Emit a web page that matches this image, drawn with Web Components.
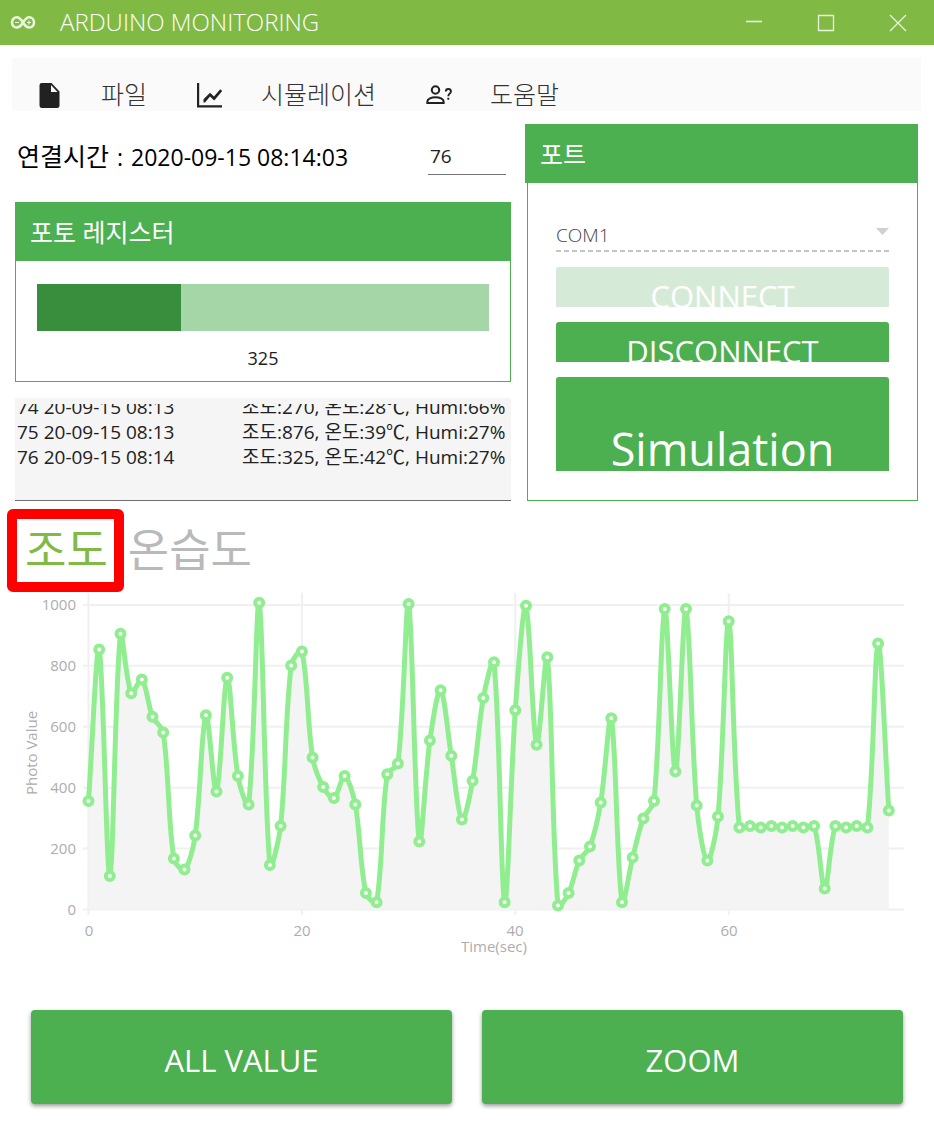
<!DOCTYPE html>
<html lang="ko">
<head>
<meta charset="utf-8">
<meta name="viewport" content="width=device-width, initial-scale=1">
<title>ARDUINO MONITORING</title>
<style>
  body { margin: 0; background: #fff; color: #000; font-family: "Open Sans", "Noto Sans CJK KR", sans-serif; }
</style>
</head>
<body>
<arduino-app></arduino-app>
<script>
function define(name, html, setup) {
  const template = document.createElement('template');
  template.innerHTML = html;
  customElements.define(name, class extends HTMLElement {
    connectedCallback() {
      if (this.shadowRoot) return;
      const root = this.attachShadow({ mode: 'open' });
      root.append(template.content.cloneNode(true));
      if (setup) setup(root, this);
    }
  });
}

define('title-bar', `
<style>
  :host { display: flex; align-items: center; height: 45px; background: #80ba45; color: #fff; }
  .logo { width: 26px; height: 15px; margin: 0 24px 0 10px; }
  h1 { flex: 1; margin: 0; padding-bottom: 2px; font-size: 24px; line-height: 30px; font-weight: 300; white-space: nowrap; }
  button { width: 72px; height: 45px; padding: 0; border: 0; background: none; color: inherit; display: grid; place-items: center; }
  button svg { width: 18px; height: 18px; fill: none; stroke: #e9f3dc; stroke-width: 1.3; }
</style>
<svg class="logo" viewBox="0 0 26 15" fill="none" stroke="#eaf5de" aria-hidden="true">
  <path stroke-width="2.6" d="M13 7.500C10.800 4 9.200 2.300 6.800 2.300C4 2.300 2 4.600 2 7.500C2 10.400 4 12.500 6.800 12.500C9.200 12.500 10.800 11 13 7.500C15.200 4 16.800 2.300 19.200 2.300C22 2.300 24 4.600 24 7.500C24 10.400 22 12.500 19.200 12.500C16.800 12.500 15.200 11 13 7.500Z"/>
  <path stroke-width="1.200" d="M5 7.500H9M17 7.500H21M19 5.500V9.500"/>
</svg>
<h1><slot></slot></h1>
<button aria-label="최소화"><svg viewBox="0 0 18 18"><path stroke-width="1.600" d="M1 7.500H17"/></svg></button>
<button aria-label="최대화"><svg viewBox="0 0 18 18"><path d="M1.500 1.500H16.500V16.500H1.500Z"/></svg></button>
<button aria-label="닫기"><svg viewBox="0 0 18 18"><path d="M1 1L17 17M17 1L1 17"/></svg></button>
`);

define('menu-item', `
<style>
  :host { display: block; }
  button { display: flex; align-items: center; gap: 38px; padding: 0; border: 0; background: none; font: inherit; color: #333; white-space: nowrap; }
  ::slotted(svg) { width: 26px; height: 26px; fill: #212121; flex: none; }
  span { padding-bottom: 2px; font-size: 25px; line-height: 28px; font-weight: 300; }
</style>
<button><slot name="icon"></slot><span><slot></slot></span></button>
`);

define('menu-bar', `
<style>
  :host { display: block; background: #fafafa; }
  nav { display: flex; gap: 50px; padding: 22px 25px 1px; height: 30px; }
</style>
<nav><slot></slot></nav>
`);

define('group-card', `
<style>
  :host { display: flex; flex-direction: column; }
  h2 { margin: 0; padding: 15px 15px 14px; background: #4caf50; color: #fff; font-size: 25px; line-height: 30px; font-weight: 400; }
  div { flex: 1; box-sizing: border-box; border: 1px solid #4caf50; border-top: 0; margin-left: var(--body-inset, 0); padding: var(--body-padding); }
</style>
<h2><slot name="header"></slot></h2>
<div><slot></slot></div>
`);

define('connection-row', `
<style>
  :host { display: flex; align-items: center; justify-content: space-between; height: 66px; padding: 0 5px 0 2px; margin-bottom: 12px; }
  p { display: flex; align-items: baseline; gap: 8px; margin: 0; padding-bottom: 2px; font-size: 23px; line-height: 30px; white-space: nowrap; }
  .ko { font-size: 25px; }
  input { box-sizing: border-box; width: 78px; height: 36px; padding: 0 2px 2px; border: 0; border-bottom: 1px solid #757575; background: none; font: inherit; font-size: 19px; color: #212121; border-radius: 0; }
</style>
<p><span class="ko">연결시간</span><span>:</span><time>2020-09-15 08:14:03</time></p>
<input value="76" aria-label="측정 횟수">
`);

define('photo-meter', `
<style>
  :host { display: block; }
  progress { display: block; appearance: none; width: 100%; height: 47px; border: 0; background: #a5d6a7; }
  progress::-webkit-progress-bar { background: #a5d6a7; }
  progress::-webkit-progress-value { background: #388e3c; }
  label { display: block; margin-top: 15px; text-align: center; font-size: 18px; line-height: 24px; color: #212121; }
</style>
<progress id="level" max="1023" value="325"></progress>
<label for="level">325</label>
`);

define('log-box', `
<style>
  :host { display: block; margin-top: 16px; padding-top: 6px; background: #f5f5f5; border-bottom: 1px solid #6e6e6e; }
  textarea { display: block; box-sizing: border-box; width: 100%; height: 96px; margin: 0; padding: 0 2px 5px; border: 0; resize: none; overflow: hidden; background: none; outline: 0; font: inherit; font-size: 19px; line-height: 25px; color: #212121; white-space: pre; tab-size: 225px; }
</style>
<textarea readonly aria-label="기록"></textarea>
`, root => {
  const area = root.querySelector('textarea');
  area.value = [
    '74 20-09-15 08:13\t조도:270, 온도:28℃, Humi:66%',
    '75 20-09-15 08:13\t조도:876, 온도:39℃, Humi:27%',
    '76 20-09-15 08:14\t조도:325, 온도:42℃, Humi:27%',
    ''
  ].join('\n');
  area.scrollTop = area.scrollHeight;
});

define('port-controls', `
<style>
  :host { display: grid; gap: 15px; }
  .port { position: relative; height: 32px; background: repeating-linear-gradient(90deg, #c4c4c4 0 5px, transparent 5px 8px) bottom / 100% 2px no-repeat; }
  select { display: block; appearance: none; width: 100%; height: 30px; padding: 0; border: 0; background: none; font: inherit; font-size: 19px; font-weight: 300; line-height: 30px; color: #444; opacity: 1; }
  .port svg { position: absolute; right: 0; top: 8px; width: 13px; height: 7px; fill: #d0d0d0; }
  button { box-sizing: border-box; display: flex; justify-content: center; align-items: flex-start; width: 100%; height: 40px; padding: 9px 0 0; overflow: hidden; border: 0; border-radius: 3px 3px 0 0; background: #4caf50; color: #fff; font: inherit; font-size: 31px; line-height: 40px; white-space: nowrap; }
  button:disabled { background: #d6ebd7; }
  .big { height: 94px; padding-top: 44px; font-size: 45px; line-height: 56px; }
</style>
<div class="port">
  <select disabled aria-label="포트"><option>COM1</option></select>
  <svg viewBox="0 0 13 7" aria-hidden="true"><path d="M0 0H13L6.500 7Z"/></svg>
</div>
<button disabled>CONNECT</button>
<button>DISCONNECT</button>
<button class="big">Simulation</button>
`);

define('chart-tabs', `
<style>
  :host { display: flex; align-items: flex-start; margin: 8px 7px 0; }
  button { box-sizing: border-box; height: 83px; padding: 0 4px 2px; border: 0; background: none; font: inherit; font-size: 45px; line-height: 56px; color: #b9b9b9; white-space: nowrap; }
  [aria-selected=true] { padding: 0 6px 2px 8px; border: 10px solid #f00; border-radius: 6px; color: #80ba45; }
</style>
<button role="tab" aria-selected="true">조도</button>
<button role="tab" aria-selected="false">온습도</button>
`);

define('photo-chart', `
<style>
  :host { display: block; }
  svg { display: block; width: 100%; height: auto; }
  text { font-size: 15px; font-weight: 500; fill: #adadad; }
  .grid { stroke: #f0f0f0; stroke-width: 2; }
  .area { fill: #f4f4f4; }
  .line { fill: none; stroke: #90ee90; stroke-width: 5; stroke-linejoin: round; }
  circle { fill: #fff; stroke: #90ee90; stroke-width: 4; }
</style>
<svg viewBox="0 0 934 378" role="img" aria-label="Photo Value"></svg>
`, root => {
  const values = [356,854,110,905,710,755,633,581,167,131,243,638,387,761,438,345,1007,146,274,801,
    847,499,402,366,438,345,54,24,444,479,1003,223,555,720,505,295,423,694,812,24,
    654,997,541,828,13,54,161,207,351,628,24,171,299,356,987,453,987,341,161,305,
    946,269,274,269,274,269,274,269,274,69,274,269,274,269,873,325];
  const X = t => 88.5 + t * 10.67, Y = v => 317.5 - v * 0.3046;
  const pts = values.map((v, i) => [X(i), Y(v)]);
  const dist = (a, b) => Math.hypot(a[0] - b[0], a[1] - b[1]);
  const mid = (a, b) => [(a[0] + b[0]) / 2, (a[1] + b[1]) / 2];
  // Smooth spline: control points follow the neighbouring midpoints, weighted by segment length.
  const smooth = 0.65;
  let curve = '';
  for (let i = 0; i < pts.length - 1; i++) {
    const p0 = pts[i - 1] || pts[i], p1 = pts[i], p2 = pts[i + 1], p3 = pts[i + 2] || p2;
    const a = mid(p0, p1), b = mid(p1, p2), c = mid(p2, p3);
    const l1 = dist(p0, p1), l2 = dist(p1, p2), l3 = dist(p2, p3);
    const k1 = l1 / (l1 + l2), k2 = l2 / (l2 + l3);
    const c1 = [0, 1].map(n => p1[n] + (b[n] - a[n]) * (1 - k1) * smooth);
    const c2 = [0, 1].map(n => p2[n] - (c[n] - b[n]) * k2 * smooth);
    curve += `C${[...c1, ...c2, ...p2].map(n => n.toFixed(1)).join(' ')}`;
  }
  let out = '<g class="grid">';
  for (let v = 0; v <= 1000; v += 200) out += `<path d="M83 ${Y(v)}H904"/>`;
  for (let t = 0; t <= 60; t += 20) out += `<path d="M${X(t)} 1V323"/>`;
  out += '</g>';
  out += `<path class="area" d="M${pts[0]}${curve}V${Y(0)}H${X(0)}Z"/><path class="line" d="M${pts[0]}${curve}"/>`;
  out += pts.map(p => `<circle cx="${p[0].toFixed(1)}" cy="${p[1].toFixed(1)}" r="4"/>`).join('');
  for (let v = 0; v <= 1000; v += 200) out += `<text x="76" y="${Math.round(Y(v)) + 5}" text-anchor="end">${v}</text>`;
  for (let t = 0; t <= 60; t += 20) out += `<text x="${Math.round(X(t))}" y="344" text-anchor="middle">${t}</text>`;
  out += '<text x="494" y="360" text-anchor="middle">Time(sec)</text>';
  out += '<text transform="translate(37 161) rotate(-90)" text-anchor="middle">Photo Value</text>';
  root.querySelector('svg').innerHTML = out;
});

define('action-button', `
<style>
  :host { display: block; }
  button { display: block; width: 100%; height: 94px; padding: 6px 0 0; border: 0; border-radius: 4px; background: #4caf50; color: #fff; font: inherit; font-size: 31px; line-height: 40px; box-shadow: 0 2px 4px rgba(0,0,0,.4); }
</style>
<button><slot></slot></button>
`);

define('arduino-app', `
<style>
  :host { display: block; }
  menu-bar { margin: 13px 13px 13px 12px; }
  .top { display: grid; grid-template-columns: 496fr 393fr; gap: 14px; padding: 0 16px 0 15px; }
  .photo { --body-padding: 23px 21px 11px; }
  .port { --body-inset: 2px; --body-padding: 37px 28px 29px; }
  .actions { display: grid; grid-template-columns: 1fr 1fr; gap: 30px; padding: 40px 31px 28px; }
</style>
<title-bar>ARDUINO MONITORING</title-bar>
<menu-bar>
  <menu-item><svg slot="icon" viewBox="0 0 26 26" aria-hidden="true"><path d="M5 1H14.500L22.500 9.500V24A2.300 2.300 0 0 1 20.200 26H5A2.400 2.400 0 0 1 2.500 23.600V3.500A2.400 2.400 0 0 1 5 1ZM14 3V10H20.500Z"/></svg>파일</menu-item>
  <menu-item><svg slot="icon" viewBox="0 0 26 26" aria-hidden="true"><path d="M0 1H2.200V23.200H25V25.500H0ZM6.500 17.200L13 10.700L17 14.600L23.200 7.200L25.200 9L17.200 18.600L13 14.600L8 20.400H6.500Z"/></svg>시뮬레이션</menu-item>
  <menu-item><svg slot="icon" viewBox="0 0 26 26" aria-hidden="true"><g fill="none" stroke="#212121" stroke-width="2.100"><circle cx="9.500" cy="8" r="3.700"/><path d="M1.400 21V19.500C1.400 17 5.500 15.200 9.500 15.200S17.600 17 17.600 19.500V21Z"/><path stroke-width="1.900" d="M19.800 9.500C19.800 7.800 21 7 22.300 7S24.900 7.900 24.900 9.400C24.900 11.600 22.300 11.800 22.300 14.200M22.300 15.700V17.700"/></g></svg>도움말</menu-item>
</menu-bar>
<main>
  <section class="top">
    <div>
      <connection-row></connection-row>
      <group-card class="photo"><span slot="header">포토 레지스터</span><photo-meter></photo-meter></group-card>
      <log-box></log-box>
    </div>
    <group-card class="port"><span slot="header">포트</span><port-controls></port-controls></group-card>
  </section>
  <chart-tabs role="tablist"></chart-tabs>
  <photo-chart></photo-chart>
  <section class="actions">
    <action-button>ALL VALUE</action-button>
    <action-button>ZOOM</action-button>
  </section>
</main>
`);
</script>
</body>
</html>
